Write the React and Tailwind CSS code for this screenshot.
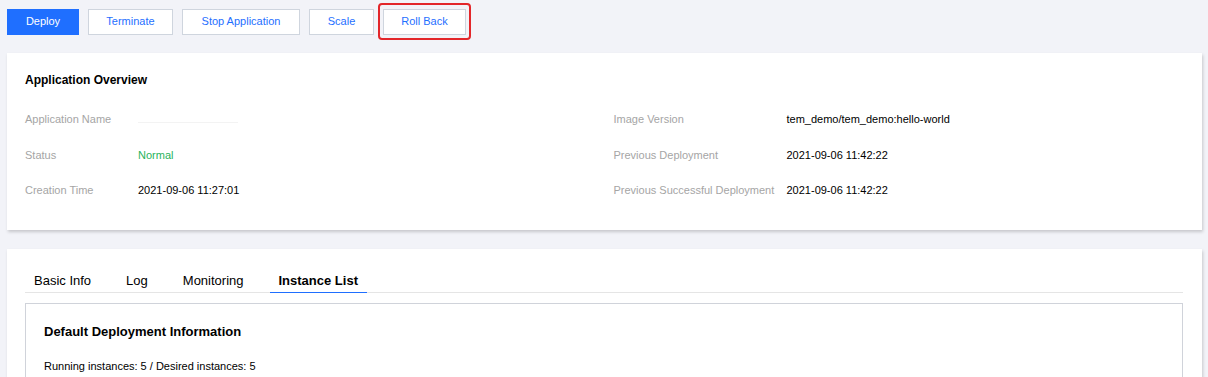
import React from "react";

const actions = ["Terminate", "Stop Application", "Scale"];

const leftRows = [
  { label: "Application Name", value: "", tone: "text-[#e6e6e6]" },
  { label: "Status", value: "Normal", tone: "text-[#29b35b]" },
  { label: "Creation Time", value: "2021-09-06 11:27:01", tone: "text-black" },
];

const rightRows = [
  { label: "Image Version", value: "tem_demo/tem_demo:hello-world" },
  { label: "Previous Deployment", value: "2021-09-06 11:42:22" },
  { label: "Previous Successful Deployment", value: "2021-09-06 11:42:22" },
];

const tabs = ["Basic Info", "Log", "Monitoring", "Instance List"];

export default function App() {
  return (
    <div
      className="h-[377px] bg-[#f2f3f8] pl-[7px] pr-[6px] overflow-hidden"
      style={{ fontFamily: '"Liberation Sans", Arial, sans-serif' }}
    >
      {/* Action buttons */}
      <div className="flex items-center h-[43px] gap-[9px]">
        <button className="h-[26px] w-[72px] bg-[#1f6fff] text-white text-[11px]">Deploy</button>
        <button className="h-[26px] w-[85px] bg-white border border-[#cfd5de] text-[#1f6fff] text-[11px]">
          {actions[0]}
        </button>
        <button className="h-[26px] w-[118px] bg-white border border-[#cfd5de] text-[#1f6fff] text-[11px]">
          {actions[1]}
        </button>
        <button className="h-[26px] w-[65px] bg-white border border-[#cfd5de] text-[#1f6fff] text-[11px]">
          {actions[2]}
        </button>
        <div className="rounded-[4px] border-2 border-[#e3262a] px-[3px] py-[3.5px] -ml-[5px]">
          <button className="h-[26px] w-[83px] bg-white border border-[#cfd5de] text-[#1f6fff] text-[11px] block">
            Roll Back
          </button>
        </div>
      </div>

      {/* Application overview */}
      <div className="mt-[10px] h-[177px] bg-white shadow-[1px_2px_3px_rgba(0,0,0,0.18)] px-[18px] pt-[20px]">
        <h2 className="text-[12px] font-bold text-black leading-[14px]">Application Overview</h2>
        <div className="grid grid-cols-2 mt-[26px]">
          <div className="flex flex-col">
            {leftRows.map((r) => (
              <div key={r.label} className="flex h-[35.5px] text-[11px] leading-[13px]">
                <span className="w-[113px] text-[#a5a5a5]">{r.label}</span>
                <span className={r.tone}>
                  {r.value || <span className="inline-block w-[100px] h-[1px] bg-[#f3f3f3] mt-[7px]" />}
                </span>
              </div>
            ))}
          </div>
          <div className="flex flex-col pl-[9px]">
            {rightRows.map((r) => (
              <div key={r.label} className="flex h-[35.5px] text-[11px] leading-[13px]">
                <span className="w-[173px] text-[#a5a5a5]">{r.label}</span>
                <span className="text-black">{r.value}</span>
              </div>
            ))}
          </div>
        </div>
      </div>

      {/* Detail tabs */}
      <div className="mt-[19px] h-[200px] bg-white shadow-[1px_2px_3px_rgba(0,0,0,0.18)] pl-[18px] pr-[19px] pt-[22px]">
        <div className="flex border-b border-[#e5e5e5] h-[22px] pl-[9px]">
          {tabs.map((t, i) => {
            const active = i === tabs.length - 1;
            return (
              <div
                key={t}
                className={
                  active
                    ? "text-[13px] font-bold text-black px-[9px] -ml-[9px] border-b-[1.5px] border-[#1f6fff] h-[22px]"
                    : "text-[13px] text-black mr-[35px]"
                }
              >
                {t}
              </div>
            );
          })}
        </div>
        <div className="mt-[10px] border border-[#d0d3da] border-b-0 h-[120px] px-[18px] pt-[20px]">
          <h3 className="text-[13px] font-bold text-black leading-[15px]">Default Deployment Information</h3>
          <p className="text-[11px] text-black mt-[19px]">Running instances: 5 / Desired instances: 5</p>
        </div>
      </div>
    </div>
  );
}
